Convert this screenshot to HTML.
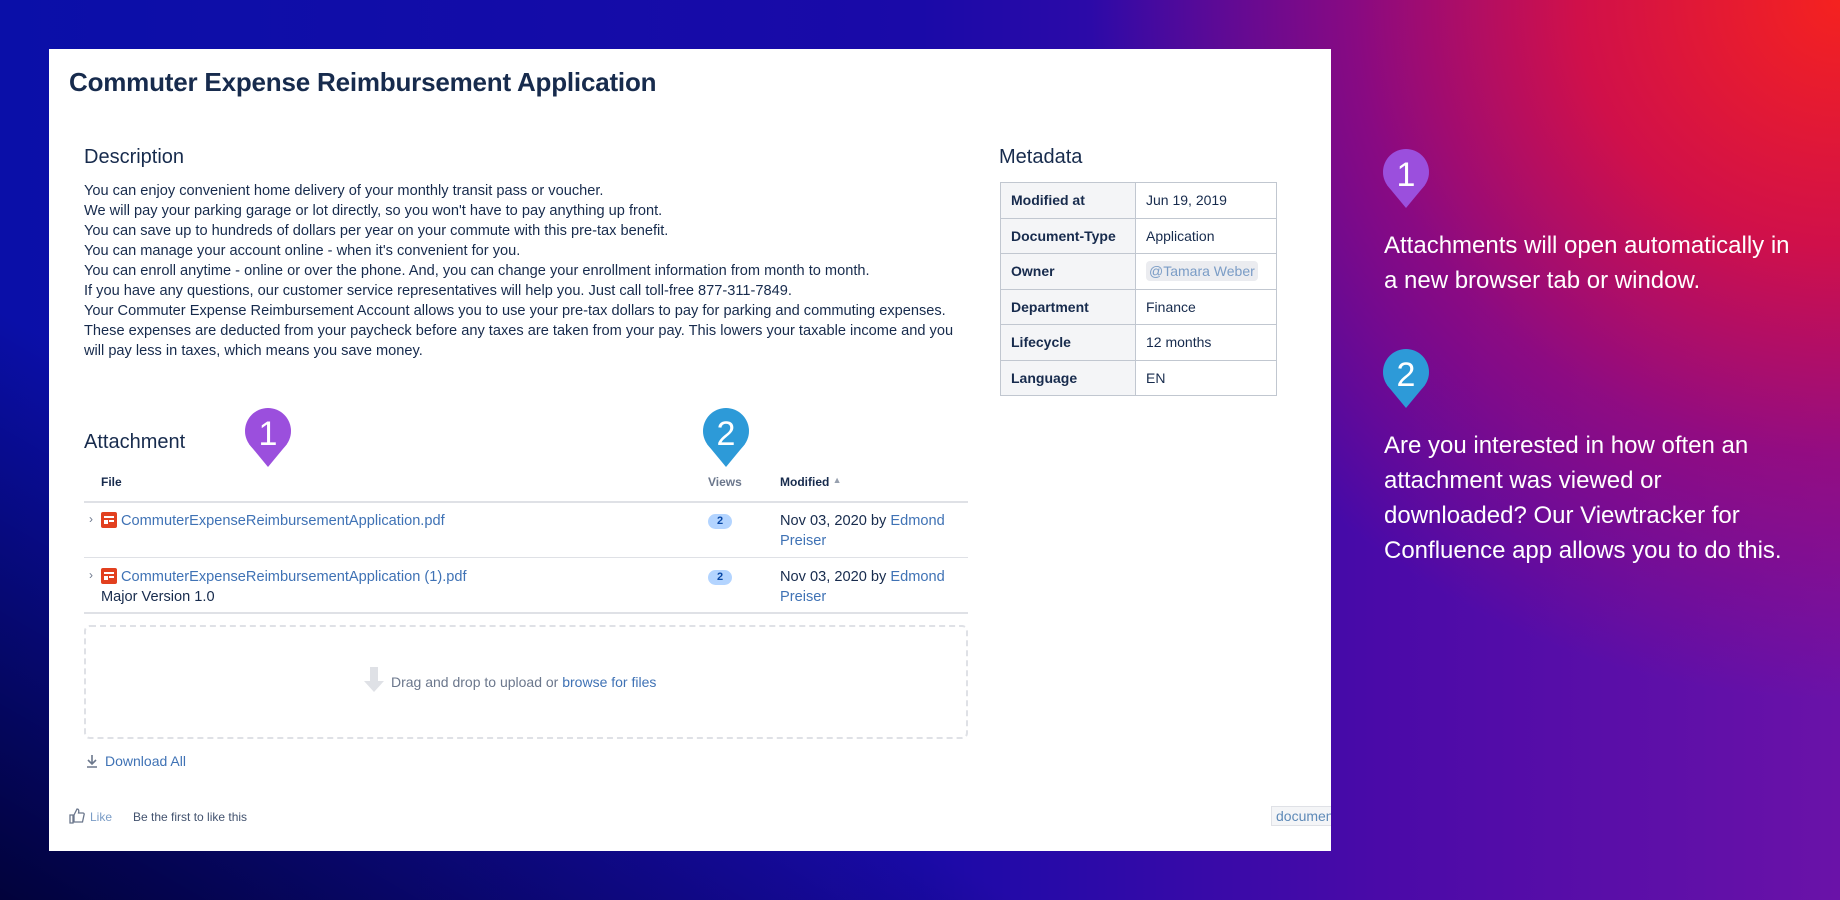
<!DOCTYPE html>
<html><head><meta charset="utf-8"><style>
*{margin:0;padding:0;box-sizing:border-box}
body{width:1840px;height:900px;overflow:hidden;position:relative;font-family:"Liberation Sans",sans-serif;
background:radial-gradient(ellipse 750px 700px at 1840px 0px,#f5221f 0%,#d0104a 35%,rgba(170,10,110,0.65) 65%,rgba(120,10,150,0) 100%),
linear-gradient(90deg,#0a0fa8 0%,#1a0aa8 50%,#4a0aa8 75%,#6a12a8 100%);}
.bl{position:absolute;left:0;top:0;width:1840px;height:900px;background:linear-gradient(30deg,rgba(0,0,40,.85) 0%,rgba(0,0,60,0) 30%)}
.panel{position:absolute;left:49px;top:49px;width:1282px;height:802px;background:#fff;overflow:hidden;color:#172b4d}
.a{position:absolute;white-space:nowrap}
.t{font-size:26px;font-weight:bold;color:#172b4d;letter-spacing:-0.2px}
.h{font-size:20px;color:#172b4d}
.p{font-size:14.6px;line-height:20px;color:#172b4d}
.lnk{color:#3f72b5}
.line{position:absolute;height:2px;background:#dfe1e6}
table{border-collapse:collapse;font-size:14px}
td{border:1px solid #c1c7d0;height:35.5px;padding:0 10px}
td.k{background:#f4f5f7;font-weight:bold;width:135px}
td.v{width:141px}
.badge{position:absolute;background:#b3d4ff;color:#0747a6;font-size:11px;font-weight:bold;border-radius:8px;width:24px;height:15px;text-align:center;line-height:15px}
.pin{position:absolute;width:46px;height:60px}
.rt{position:absolute;left:1384px;color:#fff;font-size:24px;line-height:35px;font-weight:300}
</style></head><body>
<div class="bl"></div>
<div class="panel">
<div class="a t" style="left:20px;top:18px">Commuter Expense Reimbursement Application</div>
<div class="a h" style="left:35px;top:97px">Description</div>
<div class="a p" style="left:35px;top:132px">You can enjoy convenient home delivery of your monthly transit pass or voucher.<br>We will pay your parking garage or lot directly, so you won't have to pay anything up front.<br>You can save up to hundreds of dollars per year on your commute with this pre-tax benefit.<br>You can manage your account online - when it's convenient for you.<br>You can enroll anytime - online or over the phone. And, you can change your enrollment information from month to month.<br>If you have any questions, our customer service representatives will help you. Just call toll-free 877-311-7849.<br>Your Commuter Expense Reimbursement Account allows you to use your pre-tax dollars to pay for parking and commuting expenses.<br>These expenses are deducted from your paycheck before any taxes are taken from your pay. This lowers your taxable income and you<br>will pay less in taxes, which means you save money.</div>
<div class="a h" style="left:35px;top:382px">Attachment</div>
<div class="a" style="left:52px;top:426px;font-size:12px;font-weight:bold;color:#172b4d">File</div>
<div class="a" style="left:659px;top:426px;font-size:12px;font-weight:bold;color:#6b778c">Views</div>
<div class="a" style="left:731px;top:426px;font-size:12px;font-weight:bold;color:#172b4d">Modified <span style="color:#97a0af;font-size:9px;vertical-align:3px">▲</span></div>
<div class="line" style="left:35px;top:452px;width:884px"></div>
<div class="a" style="left:40px;top:463px;font-size:12px;color:#6b778c">›</div>
<div class="a" style="left:52px;top:463px;width:16px;height:16px;background:#e2401f;border-radius:2px"><div style="position:absolute;left:3px;top:4px;width:10px;height:2px;background:#fff"></div><div style="position:absolute;left:3px;top:8px;width:4px;height:4px;background:#fff"></div><div style="position:absolute;left:8px;top:8px;width:5px;height:2px;background:#fff"></div></div>
<div class="a p lnk" style="left:72px;top:462px;font-size:14.6px">CommuterExpenseReimbursementApplication.pdf</div>
<div class="badge" style="left:659px;top:465px">2</div>
<div class="a p" style="left:731px;top:462px">Nov 03, 2020 by <span class="lnk">Edmond</span><br><span class="lnk">Preiser</span></div>
<div class="line" style="left:35px;top:508px;width:884px;height:1px"></div>
<div class="a" style="left:40px;top:519px;font-size:12px;color:#6b778c">›</div>
<div class="a" style="left:52px;top:519px;width:16px;height:16px;background:#e2401f;border-radius:2px"><div style="position:absolute;left:3px;top:4px;width:10px;height:2px;background:#fff"></div><div style="position:absolute;left:3px;top:8px;width:4px;height:4px;background:#fff"></div><div style="position:absolute;left:8px;top:8px;width:5px;height:2px;background:#fff"></div></div>
<div class="a p lnk" style="left:72px;top:518px;font-size:14.6px">CommuterExpenseReimbursementApplication (1).pdf</div>
<div class="a p" style="left:52px;top:538px">Major Version 1.0</div>
<div class="badge" style="left:659px;top:521px">2</div>
<div class="a p" style="left:731px;top:518px">Nov 03, 2020 by <span class="lnk">Edmond</span><br><span class="lnk">Preiser</span></div>
<div class="line" style="left:35px;top:563px;width:884px"></div>
<div class="a" style="left:35px;top:576px;width:884px;height:114px;border:2px dashed #dfe1e6;border-radius:6px"></div>
<div class="a" style="left:314px;top:618px;width:22px;height:26px"><svg width="22" height="26"><path d="M7 0h8v14h6L11 25 1 14h6z" fill="#dfe1e6"/></svg></div>
<div class="a" style="left:342px;top:625px;font-size:14px;color:#6b778c">Drag and drop to upload or <span class="lnk">browse for files</span></div>
<div class="a" style="left:36px;top:705px;width:14px;height:14px"><svg width="14" height="14"><path d="M7 1v8M3 6l4 4 4-4M2 13h10" stroke="#6b778c" stroke-width="1.6" fill="none"/></svg></div>
<div class="a lnk" style="left:56px;top:704px;font-size:14px">Download All</div>
<div class="a" style="left:20px;top:759px;width:16px;height:16px"><svg width="16" height="16"><path d="M1 7h3v8H1zM5 7l3-6c2 0 2 2 1.5 4H14c1 0 1.5 1 1 2l-1.5 7H5z" stroke="#6b778c" stroke-width="1.3" fill="none"/></svg></div>
<div class="a" style="left:41px;top:761px;font-size:12px;color:#7a9cc6">Like</div>
<div class="a" style="left:84px;top:761px;font-size:12px;color:#42526e">Be the first to like this</div>
<div class="a" style="left:1222px;top:757px;font-size:14px;color:#5e8ab8;background:#f4f5f7;border:1px solid #dfe1e6;padding:1px 4px">document</div>
<div class="a h" style="left:950px;top:97px">Metadata</div>
<table class="a" style="left:951px;top:133px">
<tr><td class="k">Modified at</td><td class="v">Jun 19, 2019</td></tr>
<tr><td class="k">Document-Type</td><td class="v">Application</td></tr>
<tr><td class="k">Owner</td><td class="v"><span style="background:#ebecf0;color:#7a9cc6;border-radius:4px;padding:2px 3px;font-size:14px">@Tamara Weber</span></td></tr>
<tr><td class="k">Department</td><td class="v">Finance</td></tr>
<tr><td class="k">Lifecycle</td><td class="v">12 months</td></tr>
<tr><td class="k">Language</td><td class="v">EN</td></tr>
</table>
<svg class="pin" style="left:196px;top:359px"><circle cx="23" cy="23" r="23" fill="#9b4fdd"/><polygon points="4,36 42,36 23,59" fill="#9b4fdd"/><text x="23" y="37" text-anchor="middle" font-family="Liberation Sans" font-size="34" fill="#fff" font-weight="300">1</text></svg>
<svg class="pin" style="left:654px;top:359px"><circle cx="23" cy="23" r="23" fill="#2d9ad8"/><polygon points="4,36 42,36 23,59" fill="#2d9ad8"/><text x="23" y="37" text-anchor="middle" font-family="Liberation Sans" font-size="34" fill="#fff" font-weight="300">2</text></svg>
</div>
<svg class="pin" style="left:1383px;top:149px"><circle cx="23" cy="23" r="23" fill="#9b4fdd"/><polygon points="4,36 42,36 23,59" fill="#9b4fdd"/><text x="23" y="37" text-anchor="middle" font-family="Liberation Sans" font-size="34" fill="#fff">1</text></svg>
<svg class="pin" style="left:1383px;top:349px"><circle cx="23" cy="23" r="23" fill="#2d9ad8"/><polygon points="4,36 42,36 23,59" fill="#2d9ad8"/><text x="23" y="37" text-anchor="middle" font-family="Liberation Sans" font-size="34" fill="#fff">2</text></svg>
<div class="rt" style="top:228px">Attachments will open automatically in<br>a new browser tab or window.</div>
<div class="rt" style="top:428px">Are you interested in how often an<br>attachment was viewed or<br>downloaded? Our Viewtracker for<br>Confluence app allows you to do this.</div>
</body></html>
